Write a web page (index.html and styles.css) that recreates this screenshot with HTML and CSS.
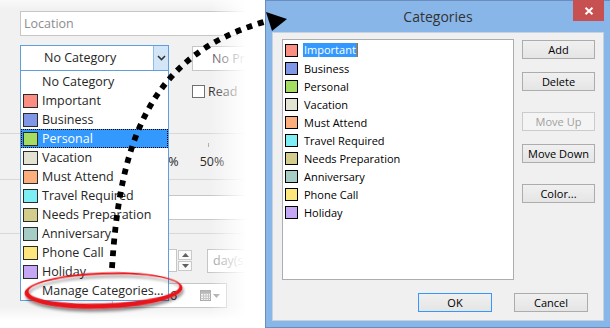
FILE: index.html
```html
<!DOCTYPE html>
<html>
<head>
<meta charset="utf-8">
<title>Categories</title>
<link rel="stylesheet" href="styles.css">
</head>
<body>
<div class="page">
  <div class="form">
    <div class="row-loc"><div class="box loc"><span class="ph">Location</span></div></div>
    <div class="row-combo">
      <div class="combo">
        <span class="combo-text">No Category</span>
        <span class="combo-btn"><svg width="9" height="6" viewBox="0 0 9 6"><path d="M1 1 L4.5 4.5 L8 1" fill="none" stroke="#333" stroke-width="1.6"/></svg></span>
      </div>
      <div class="box nop">No Priority</div>
    </div>
    <div class="row-read"><span class="chk"></span><span class="read">Read</span></div>
    <div class="sep sep-a"></div>
    <div class="tick"></div>
    <div class="scale"><span>25%</span><span>50%</span></div>
    <div class="sep sep-b"></div>
    <div class="box field"></div>
    <div class="sep sep-c"></div>
    <div class="row-spin">
      <div class="box num"></div>
      <div class="spinner">
        <span class="spin"><svg width="7" height="4" viewBox="0 0 7 4"><path d="M0 4 L3.5 0 L7 4 Z" fill="#606060"/></svg></span>
        <span class="spin"><svg width="7" height="4" viewBox="0 0 7 4"><path d="M0 0 L3.5 4 L7 0 Z" fill="#606060"/></svg></span>
      </div>
      <div class="box days">day(s)</div>
    </div>
    <div class="row-date">
      <div class="box date">
        <span class="date-text">6</span>
        <span class="cal">
          <svg width="11" height="11" viewBox="0 0 11 11"><rect x="0.5" y="0.5" width="10" height="10" fill="#f4f4f4" stroke="#a8a8a8"/><path d="M0.5 3.5 H10.5 M0.5 6 H10.5 M0.5 8.5 H10.5 M3.5 3.5 V10.5 M6 3.5 V10.5 M8.5 3.5 V10.5" stroke="#c4c4c4" stroke-width="1"/><rect x="0.5" y="0.5" width="10" height="2.5" fill="#b8b8b8"/></svg>
          <svg width="7" height="4" viewBox="0 0 7 4"><path d="M0 0 L3.5 4 L7 0 Z" fill="#a8a8a8"/></svg>
        </span>
      </div>
    </div>
  </div>

  <ul class="dropdown">
    <li><span class="dd-none">No Category</span></li>
    <li><span class="dd-sw c-imp"></span>Important</li>
    <li><span class="dd-sw c-bus"></span>Business</li>
    <li class="sel"><span class="dd-sw c-per"></span>Personal</li>
    <li><span class="dd-sw c-vac"></span>Vacation</li>
    <li><span class="dd-sw c-must"></span>Must Attend</li>
    <li><span class="dd-sw c-trav"></span>Travel Required</li>
    <li><span class="dd-sw c-need"></span>Needs Preparation</li>
    <li><span class="dd-sw c-ann"></span>Anniversary</li>
    <li><span class="dd-sw c-phone"></span>Phone Call</li>
    <li><span class="dd-sw c-hol"></span>Holiday</li>
    <li><span class="dd-none">Manage Categories...</span></li>
  </ul>

  <div class="dialog">
    <div class="titlebar">
      <span class="title">Categories</span>
      <span class="close"><svg width="10" height="8" viewBox="0 0 10 8"><path d="M1.5 0.8 L8.5 7.2 M8.5 0.8 L1.5 7.2" stroke="#fff" stroke-width="2"/></svg></span>
    </div>
    <div class="client">
      <div class="top">
        <ul class="list">
          <li><span class="sw c-imp"></span><span class="lbl sel">Important</span></li>
          <li><span class="sw c-bus"></span><span class="lbl">Business</span></li>
          <li><span class="sw c-per"></span><span class="lbl">Personal</span></li>
          <li><span class="sw c-vac"></span><span class="lbl">Vacation</span></li>
          <li><span class="sw c-must"></span><span class="lbl">Must Attend</span></li>
          <li><span class="sw c-trav"></span><span class="lbl">Travel Required</span></li>
          <li><span class="sw c-need"></span><span class="lbl">Needs Preparation</span></li>
          <li><span class="sw c-ann"></span><span class="lbl">Anniversary</span></li>
          <li><span class="sw c-phone"></span><span class="lbl">Phone Call</span></li>
          <li><span class="sw c-hol"></span><span class="lbl">Holiday</span></li>
        </ul>
        <div class="btns">
          <div class="btn">Add</div>
          <div class="btn g13">Delete</div>
          <div class="btn g21 dis">Move Up</div>
          <div class="btn g13">Move Down</div>
          <div class="btn g21">Color...</div>
        </div>
      </div>
      <div class="footer">
        <div class="btn def">OK</div>
        <div class="btn">Cancel</div>
      </div>
    </div>
  </div>

  <svg class="annot" width="610" height="328" viewBox="0 0 610 328">
    <defs>
      <filter id="sh" x="-10%" y="-50%" width="120%" height="220%">
        <feDropShadow dx="1" dy="3" stdDeviation="1.8" flood-color="#000" flood-opacity="0.45"/>
      </filter>
    </defs>
    <path filter="url(#sh)" fill="#e8141b" fill-rule="evenodd" transform="rotate(-2 103 290)"
      d="M24.5,290.5 a79,18 0 1,0 158,0 a79,18 0 1,0 -158,0 Z M28.5,289 a75.5,14.5 0 1,0 151,0 a75.5,14.5 0 1,0 -151,0 Z"/>
    <path d="M112,268 C120,140 150,55 264,22" fill="none" stroke="#000" stroke-width="5.8" stroke-dasharray="5.8 6"/>
    <polygon points="266,12 287,19 272,31" fill="#000"/>
  </svg>
</div>
</body>
</html>
```

FILE: styles.css
```css
* { box-sizing: border-box; }
html, body { margin: 0; padding: 0; }
body {
  width: 610px;
  height: 328px;
  overflow: hidden;
  background: #fff;
  font-family: "Open Sans", "Noto Sans", sans-serif;
}
.page { position: relative; width: 610px; height: 328px; overflow: hidden; }

/* ---------- background form ---------- */
.form {
  position: relative;
  width: 300px;
  height: 328px;
  background: #f1f1f1;
  overflow: hidden;
  font-size: 12.5px;
  color: #262626;
}
.form::after {
  content: "";
  position: absolute;
  inset: 0;
  background:
    linear-gradient(to right, rgba(255,255,255,0) 210px, #fff 246px),
    linear-gradient(to bottom, rgba(255,255,255,0) 307px, #fff 320px),
    linear-gradient(to bottom, rgba(255,255,255,0.6) 0, rgba(255,255,255,0) 10px);
}
.box { background: #fff; border: 1px solid #c6c6c6; }
.row-loc { padding: 11px 0 0 20px; }
.loc { height: 25px; width: 245px; display: flex; align-items: center; padding-left: 3px; }
.ph { color: #8d8d8d; }
.row-combo { margin-top: 9px; padding-left: 20px; display: flex; align-items: flex-start; }
.combo { width: 149px; height: 26px; border: 1px solid #5e9fe0; background: #fff; display: flex; flex: none; }
.combo-text { flex: 1; padding-left: 23px; line-height: 24px; white-space: nowrap; }
.combo-btn {
  width: 15px;
  background: #d2e6f8;
  border-left: 1px solid #8ebde9;
  display: flex;
  align-items: center;
  justify-content: center;
}
.nop {
  margin-left: 23px;
  margin-top: 1px;
  width: 90px;
  height: 25px;
  padding-left: 19px;
  line-height: 23px;
  color: #5a4a5a;
  white-space: nowrap;
  flex: none;
}
.row-read { margin-top: 14px; padding-left: 192px; display: flex; align-items: center; height: 13px; }
.chk { width: 13px; height: 13px; border: 1px solid #707070; background: #fff; flex: none; }
.read { margin-left: 3px; white-space: nowrap; }
.sep { height: 1px; background: #d8d8d8; }
.sep-a { margin-top: 35px; }
.tick { margin: 9px 0 0 208px; width: 1px; height: 4px; background: #b0b0b0; }
.scale { margin-top: 7px; height: 16px; line-height: 16px; display: flex; gap: 21px; padding-left: 154px; white-space: nowrap; }
.sep-b { margin-top: 9px; }
.field { margin: 15px 0 0 20px; width: 245px; height: 25px; }
.sep-c { margin-top: 13px; }
.row-spin { margin-top: 15px; display: flex; align-items: flex-start; }
.num { margin-left: 60px; width: 117px; height: 23px; flex: none; }
.spinner { margin-left: 1px; margin-top: 1px; width: 14px; display: flex; flex-direction: column; gap: 1px; flex: none; }
.spin {
  height: 10px;
  border: 1px solid #c9c9c9;
  background: #fafafa;
  display: flex;
  align-items: center;
  justify-content: center;
}
.days {
  margin-left: 15px;
  width: 80px;
  height: 24px;
  padding-left: 5px;
  line-height: 22px;
  color: #9a9a9a;
  flex: none;
}
.row-date { margin-top: 10px; padding-left: 112px; }
.date { width: 115px; height: 25px; display: flex; align-items: center; padding: 0 6px 0 4px; }
.date-text { flex: 1; white-space: nowrap; padding-left: 53px; }
.cal { display: flex; align-items: center; gap: 2px; }

/* ---------- dropdown menu ---------- */
.dropdown {
  position: absolute;
  left: 20px;
  top: 71px;
  width: 149px;
  margin: 0;
  padding: 1px 0 0;
  list-style: none;
  background: #fff;
  border: 1px solid #5e9fe0;
  border-top: none;
  font-size: 12.5px;
  color: #262626;
  z-index: 2;
}
.dropdown li { height: 19px; display: flex; align-items: center; padding-left: 2px; white-space: nowrap; }
.dd-sw { width: 15px; height: 14px; border: 1px solid #2b2b2b; margin-right: 4px; flex: none; }
.dd-none { padding-left: 19px; }
.dropdown li.sel { background: #3399ff; color: #fff; border: 1px dotted #000; padding-left: 1px; }

/* category colours */
.c-imp { background: #fa8e83; }
.c-bus { background: #7f97e6; }
.c-per { background: #a5dd63; }
.c-vac { background: #e3e3d3; }
.c-must { background: #fcae7c; }
.c-trav { background: #7eeef5; }
.c-need { background: #d3cd8b; }
.c-ann { background: #a6cdc5; }
.c-phone { background: #fde67c; }
.c-hol { background: #c5a7f5; }

/* ---------- dialog window ---------- */
.dialog {
  position: absolute;
  left: 265px;
  top: 0;
  width: 346px;
  height: 328px;
  border: 1px solid #6b8dbd;
  background: #89b6e9;
  padding: 0 6px 6px;
  display: flex;
  flex-direction: column;
  z-index: 3;
}
.titlebar {
  height: 31px;
  flex: none;
  display: grid;
  grid-template-columns: 1fr auto 1fr;
  align-items: center;
}
.title { grid-column: 2; font-size: 14px; color: #333; }
.close {
  grid-column: 3;
  justify-self: end;
  align-self: start;
  margin-top: -1px;
  width: 31px;
  height: 21px;
  background: #c75050;
  display: flex;
  align-items: center;
  justify-content: center;
}
.client {
  flex: 1;
  background: #f0f0f0;
  border: 1px solid #c4d2e2;
  padding: 6px 8px 8px 9px;
  display: flex;
  flex-direction: column;
  font-size: 11px;
  color: #000;
}
.top { display: flex; gap: 8px; height: 241px; flex: none; }
.list {
  width: 232px;
  height: 241px;
  border: 1px solid #abadb3;
  background: #fff;
  padding: 1px 0 0;
  margin: 0;
  list-style: none;
  flex: none;
}
.list li { height: 18px; display: flex; align-items: center; padding-left: 2px; white-space: nowrap; }
.sw { width: 13px; height: 13px; border: 1px solid #000; margin-right: 5px; flex: none; }
.lbl { padding-left: 1px; }
.lbl.sel { background: #3399ff; color: #fff; padding: 0 1px; line-height: 14px; border-right: 1px solid #c86400; }
.btns { width: 73px; display: flex; flex-direction: column; padding-top: 1px; flex: none; }
.btn {
  height: 19px;
  border: 1px solid #acacac;
  background: linear-gradient(#f0f0f0, #e5e5e5);
  color: #000;
  display: flex;
  align-items: center;
  justify-content: center;
  white-space: nowrap;
}
.g13 { margin-top: 13px; }
.g21 { margin-top: 21px; }
.btn.dis { color: #a0a0a0; border-color: #cbcbcb; background: #f4f4f4; }
.footer { margin-top: 13px; display: flex; justify-content: flex-end; gap: 22px; padding-right: 7px; }
.footer .btn { width: 74px; }
.btn.def { border-color: #3399ff; }

/* ---------- annotations ---------- */
.annot { position: absolute; left: 0; top: 0; z-index: 5; pointer-events: none; }
```
